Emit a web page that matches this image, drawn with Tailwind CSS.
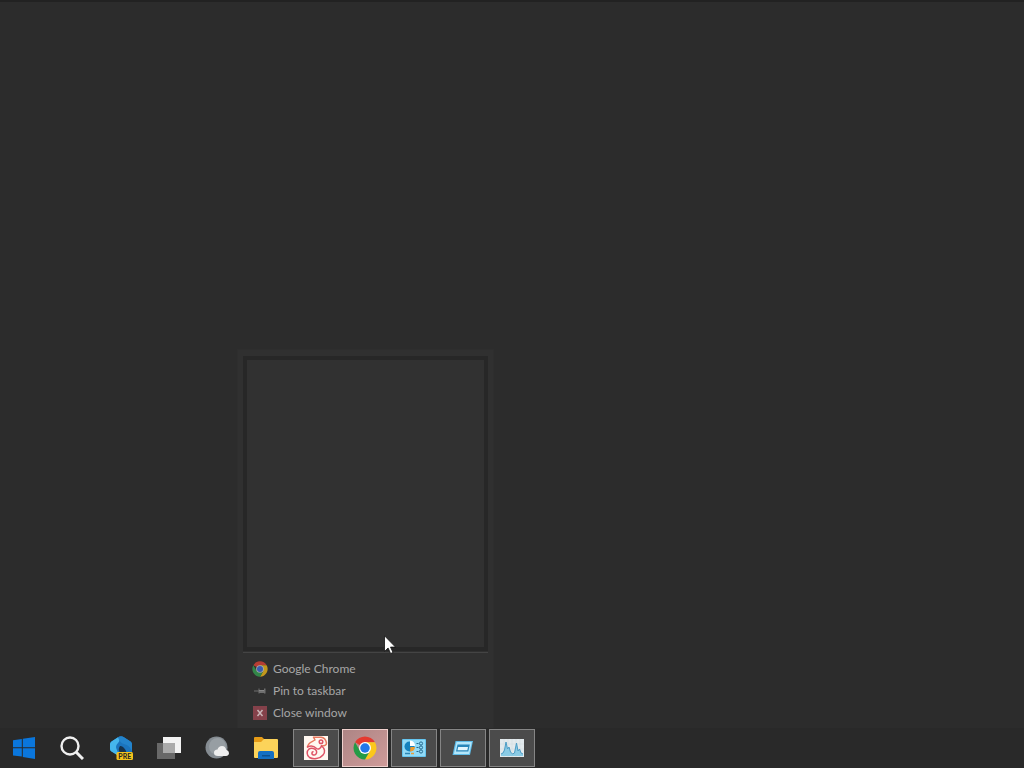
<!DOCTYPE html>
<html lang="en">
<head>
  <meta charset="UTF-8">
  <meta name="viewport" content="width=device-width, initial-scale=1.0">
  <title>Desktop</title>
  <script src="https://cdn.jsdelivr.net/npm/@tailwindcss/browser@4"></script>
</head>
<body class="min-h-screen flex flex-col bg-[#2c2c2c] font-['Lato',sans-serif] overflow-hidden">

  <!-- Desktop -->
  <main class="relative flex-1 border-t-2 border-[#222222]">

    <!-- Jump list -->
    <div class="absolute bottom-0 left-[237px] w-[257px] bg-[#303030] border-x border-t border-[#2e2e2e] px-[5px] pt-[6px] pb-1">
      <div class="h-[295px] bg-[#313131] border-4 border-[#272727]"></div>
      <ul class="mt-px pt-[5px] border-t border-[#444444] text-xs text-[#a6a6a6]">
        <li>
          <button class="flex items-center gap-[5px] w-full h-[22px] pl-[9px]">
            <svg class="size-4" viewBox="0 0 48 48" opacity=".72">
              <path fill="#ea4335" d="M24 24 4.100 12.500a23 23 0 0 1 39.800 0H24z"/>
              <path fill="#fbc116" d="M43.900 12.500A23 23 0 0 1 24 47l10-17.300L24 12.500z"/>
              <path fill="#34a853" d="M24 47A23 23 0 0 1 4.100 12.500l10 17.300L24 35.500l10-5.800z"/>
              <circle cx="24" cy="24" r="11.500" fill="#ddd"/>
              <circle cx="24" cy="24" r="9" fill="#3f6fe0"/>
            </svg>
            Google Chrome
          </button>
        </li>
        <li>
          <button class="flex items-center gap-[5px] w-full h-[22px] pl-[9px]">
            <svg class="size-4" viewBox="0 0 16 16" fill="#6e6e6e">
              <path d="M2 7.500h5v1H2zM6.500 5.500h1v5h-1zM7 7h5v3H7zM12 5.500h1.500v5H12z"/>
              <path fill="#868686" d="M7 7h5v1H7z"/>
            </svg>
            Pin to taskbar
          </button>
        </li>
        <li>
          <button class="flex items-center gap-[5px] w-full h-[22px] pl-[9px]">
            <svg class="size-4" viewBox="0 0 16 16">
              <path fill="#84414a" d="M1 1h14v14H1z"/>
              <path stroke="#c9b5b8" stroke-width="1.500" d="m5.500 5 5 6M10.500 5l-5 6"/>
            </svg>
            Close window
          </button>
        </li>
      </ul>
    </div>

    <!-- Mouse pointer -->
    <svg class="absolute left-[384px] bottom-[74px] w-3 h-[19px]" viewBox="0 0 12 19">
      <path fill="#fff" stroke="#111" stroke-width=".8" d="M.5.800v15.700l3.600-3.500 2.500 5.500 2.400-1-2.500-5.400h5z"/>
    </svg>
  </main>

  <!-- Taskbar -->
  <nav class="flex gap-[3px] h-10 py-px bg-[#292929]">
    <div class="grid grid-cols-6 w-[290px]">
      <button class="flex items-center justify-center" aria-label="Start">
        <svg class="w-[22px] h-[22px]" viewBox="0 0 22 22" fill="#0a76dc">
          <path d="M0 3.200 8.800 2v8.300H0zM9.800 1.800 22 0v10.300H9.800zM0 11.300h8.800v8.300L0 18.400zM9.800 11.300H22V22L9.800 20z"/>
        </svg>
      </button>
      <button class="flex items-center justify-center" aria-label="Search">
        <svg class="size-6" viewBox="0 0 24 24" fill="none" stroke="#f0f0f0">
          <circle cx="10" cy="10" r="8.500" stroke-width="2.400"/>
          <path stroke-width="3" d="m16 16 7 7"/>
        </svg>
      </button>
      <button class="flex items-center justify-center" aria-label="Preview app">
        <svg class="size-6" viewBox="0 0 24 24">
          <path fill="#1b74bd" d="M1 8q0-1.500 1.500-2.500L9.500 1Q12-.5 14.500 1l7 4.500Q23 6.500 23 8v8l-5 3H9l-6.500-3.500Q1 14.500 1 13z"/>
          <path fill="#45b6ec" d="M1 8q0-1.500 1.500-2.500L9 1.300Q12 4 9 7t-1.500 6q.5 3 3 4.500L8 19l-5.500-3.500Q1 14.500 1 13z"/>
          <path fill="#2383cb" d="M9 1.300q3-2 6 0l6.500 4.200Q23 6.500 23 8v8q-2-7-8-8-4-.7-6-6.700z"/>
          <path fill="#16324b" d="M11 10q4-.5 6.500 6.500H11q-2.500-3 0-6.500z"/>
          <rect x="7.500" y="16" width="16.500" height="8" rx="1.500" fill="#f3c31c"/>
          <text x="15.800" y="22.600" text-anchor="middle" font-size="7" font-weight="700" fill="#222">PRE</text>
        </svg>
      </button>
      <button class="flex items-center justify-center" aria-label="Task view">
        <svg class="size-6" viewBox="0 0 24 24">
          <path fill="#f2f2f2" d="M6 1h18v16H6z"/>
          <path fill="#686868" d="M0 7h18v16H0z"/>
          <path fill="#aaa" d="M6 7h12v10H6z"/>
        </svg>
      </button>
      <button class="flex items-center justify-center" aria-label="Weather">
        <svg class="size-6" viewBox="0 0 24 24">
          <circle cx="11.500" cy="11.500" r="11" fill="#858c92"/>
          <circle cx="12.500" cy="10.500" r="8.500" fill="#979ea3"/>
          <path fill="#eee" d="M13 20q-4 0-4-3.300 0-3 3.500-3.200 1-3.500 4.500-3.500t4.200 3.800Q24 14.500 24 17t-3 3z"/>
        </svg>
      </button>
      <button class="flex items-center justify-center" aria-label="File Explorer">
        <svg class="size-6" viewBox="0 0 24 24">
          <path fill="#e69b16" d="M0 2q0-1 1-1h7l2.500 2.500L9 7H0z"/>
          <path fill="#fcd35a" d="M0 6h7l3-3h13q1 0 1 1v17q0 1-1 1H1q-1 0-1-1z"/>
          <path fill="#146fc3" d="M4 23v-6q0-2 2-2h12q2 0 2 2v6z"/>
          <path fill="#0d508f" d="M8 19h8v1.500H8z"/>
        </svg>
      </button>
    </div>
    <button class="flex items-center justify-center w-[46px] bg-[#4b4b4b] border border-[#858585]" aria-label="Chameleon">
      <svg class="size-6" viewBox="0 0 24 24" fill="none" stroke="#df5365" stroke-width="1.500" stroke-linecap="round" stroke-linejoin="round">
        <path fill="#fff8f1" stroke="none" d="M0 0h24v24H0z"/>
        <path stroke="#e8785f" d="M3.500 11C4 6.500 8 6 11 4L9.500 1.200C13 1.500 14 1 17 1.200c3.500.3 5 3 5.500 5.800 0 2-2 3-5 3"/>
        <path d="M17.500 10c3.500 2.500 4 6 1.500 9-3 4-10 4.500-13.500 2.500-3-2-3-6.500-.5-8.500 2.500-1.500 6.500-.5 7.500 2 .8 3-1.500 4.500-3.200 4-1.800-.5-1.800-2.800-.3-3.200"/>
        <path d="M3.500 11c4-2 7-.5 9 1.500 1.500 1 4 .5 5-2.500"/>
        <circle cx="17" cy="5.800" r="1.800"/>
      </svg>
    </button>
    <button class="flex items-center justify-center w-[46px] bg-linear-to-br from-[#ad8585] to-[#cf9b99] border border-[#efd0cd]" aria-label="Google Chrome">
      <svg class="size-6" viewBox="0 0 48 48">
        <path fill="#e53a30" d="M24 24 4.100 12.500a23 23 0 0 1 39.800 0H24z"/>
        <path fill="#fcc71c" d="M43.900 12.500A23 23 0 0 1 24 47l10-17.300L24 12.500z"/>
        <path fill="#249b46" d="M24 47A23 23 0 0 1 4.100 12.500l10 17.300L24 35.500l10-5.800z"/>
        <circle cx="24" cy="24" r="12" fill="#fff"/>
        <circle cx="24" cy="24" r="9.500" fill="#2378e9"/>
      </svg>
    </button>
    <button class="flex items-center justify-center w-[46px] bg-[#4b4b4b] border border-[#858585]" aria-label="Control Panel">
      <svg class="size-6" viewBox="0 0 24 24">
        <rect y="3" width="24" height="18" rx="1" fill="#65c5ef"/>
        <path fill="#92daf6" d="M1 4h22v16H1z"/>
        <circle cx="7.500" cy="10.500" r="5" fill="#1682bd"/>
        <path fill="#fff" d="M8 10V4.500q5 .5 5 5.500z"/>
        <path fill="#ed9a2d" d="M8.500 11h4.500q-.5 4.500-5 4.500z"/>
        <path fill="none" stroke="#24698e" d="M14.500 7.500h2M14.500 11.500h2M14.500 15.500h2"/>
        <g fill="none" stroke="#24698e">
          <circle cx="19" cy="7.500" r="1.600"/>
          <circle cx="19" cy="11.500" r="1.600"/>
          <circle cx="19" cy="15.500" r="1.600"/>
        </g>
        <path stroke="#2c86b5" stroke-width="1.500" d="M3 17.500h5"/>
        <path stroke="#e79d3a" stroke-width="1.500" d="M9 17.500h3"/>
      </svg>
    </button>
    <button class="flex items-center justify-center w-[46px] bg-[#4b4b4b] border border-[#858585]" aria-label="Run">
      <svg class="size-6" viewBox="0 0 24 24">
        <path fill="#5fbce8" d="M4.500 5H22l-3 14H1.500z"/>
        <path fill="#b3e6fa" d="M5.500 6h15.300l-2.600 12H2.900z"/>
        <path fill="#2986b9" d="M6.500 8.500h12.300l-1.500 7H5z"/>
        <path fill="#e2f6fe" d="M7.200 11h9.800l-.7 3.200H6.500z"/>
      </svg>
    </button>
    <button class="flex items-center justify-center w-[46px] bg-[#4b4b4b] border border-[#858585]" aria-label="Resource Monitor">
      <svg class="size-6" viewBox="0 0 24 24">
        <path fill="#e3eaed" d="M0 3h24v18H0z"/>
        <path stroke="#ccd8dd" stroke-width=".5" d="M4 3v18M8 3v18M12 3v18M16 3v18M20 3v18M0 8h24M0 13h24"/>
        <path fill="#8acbe5" d="M1 20v-2l2-1 1.500-3L6 6l1.500 7 1.500-2 1.500 5 2 2 2-1L16.500 7l1.500 8 1.500-2 1.500 4 2 1v2z"/>
        <path fill="none" stroke="#4c9cc5" d="m1 18 2-1 1.500-3L6 6l1.500 7 1.500-2 1.500 5 2 2 2-1L16.500 7l1.500 8 1.500-2 1.500 4 2 1"/>
      </svg>
    </button>
  </nav>

</body>
</html>
